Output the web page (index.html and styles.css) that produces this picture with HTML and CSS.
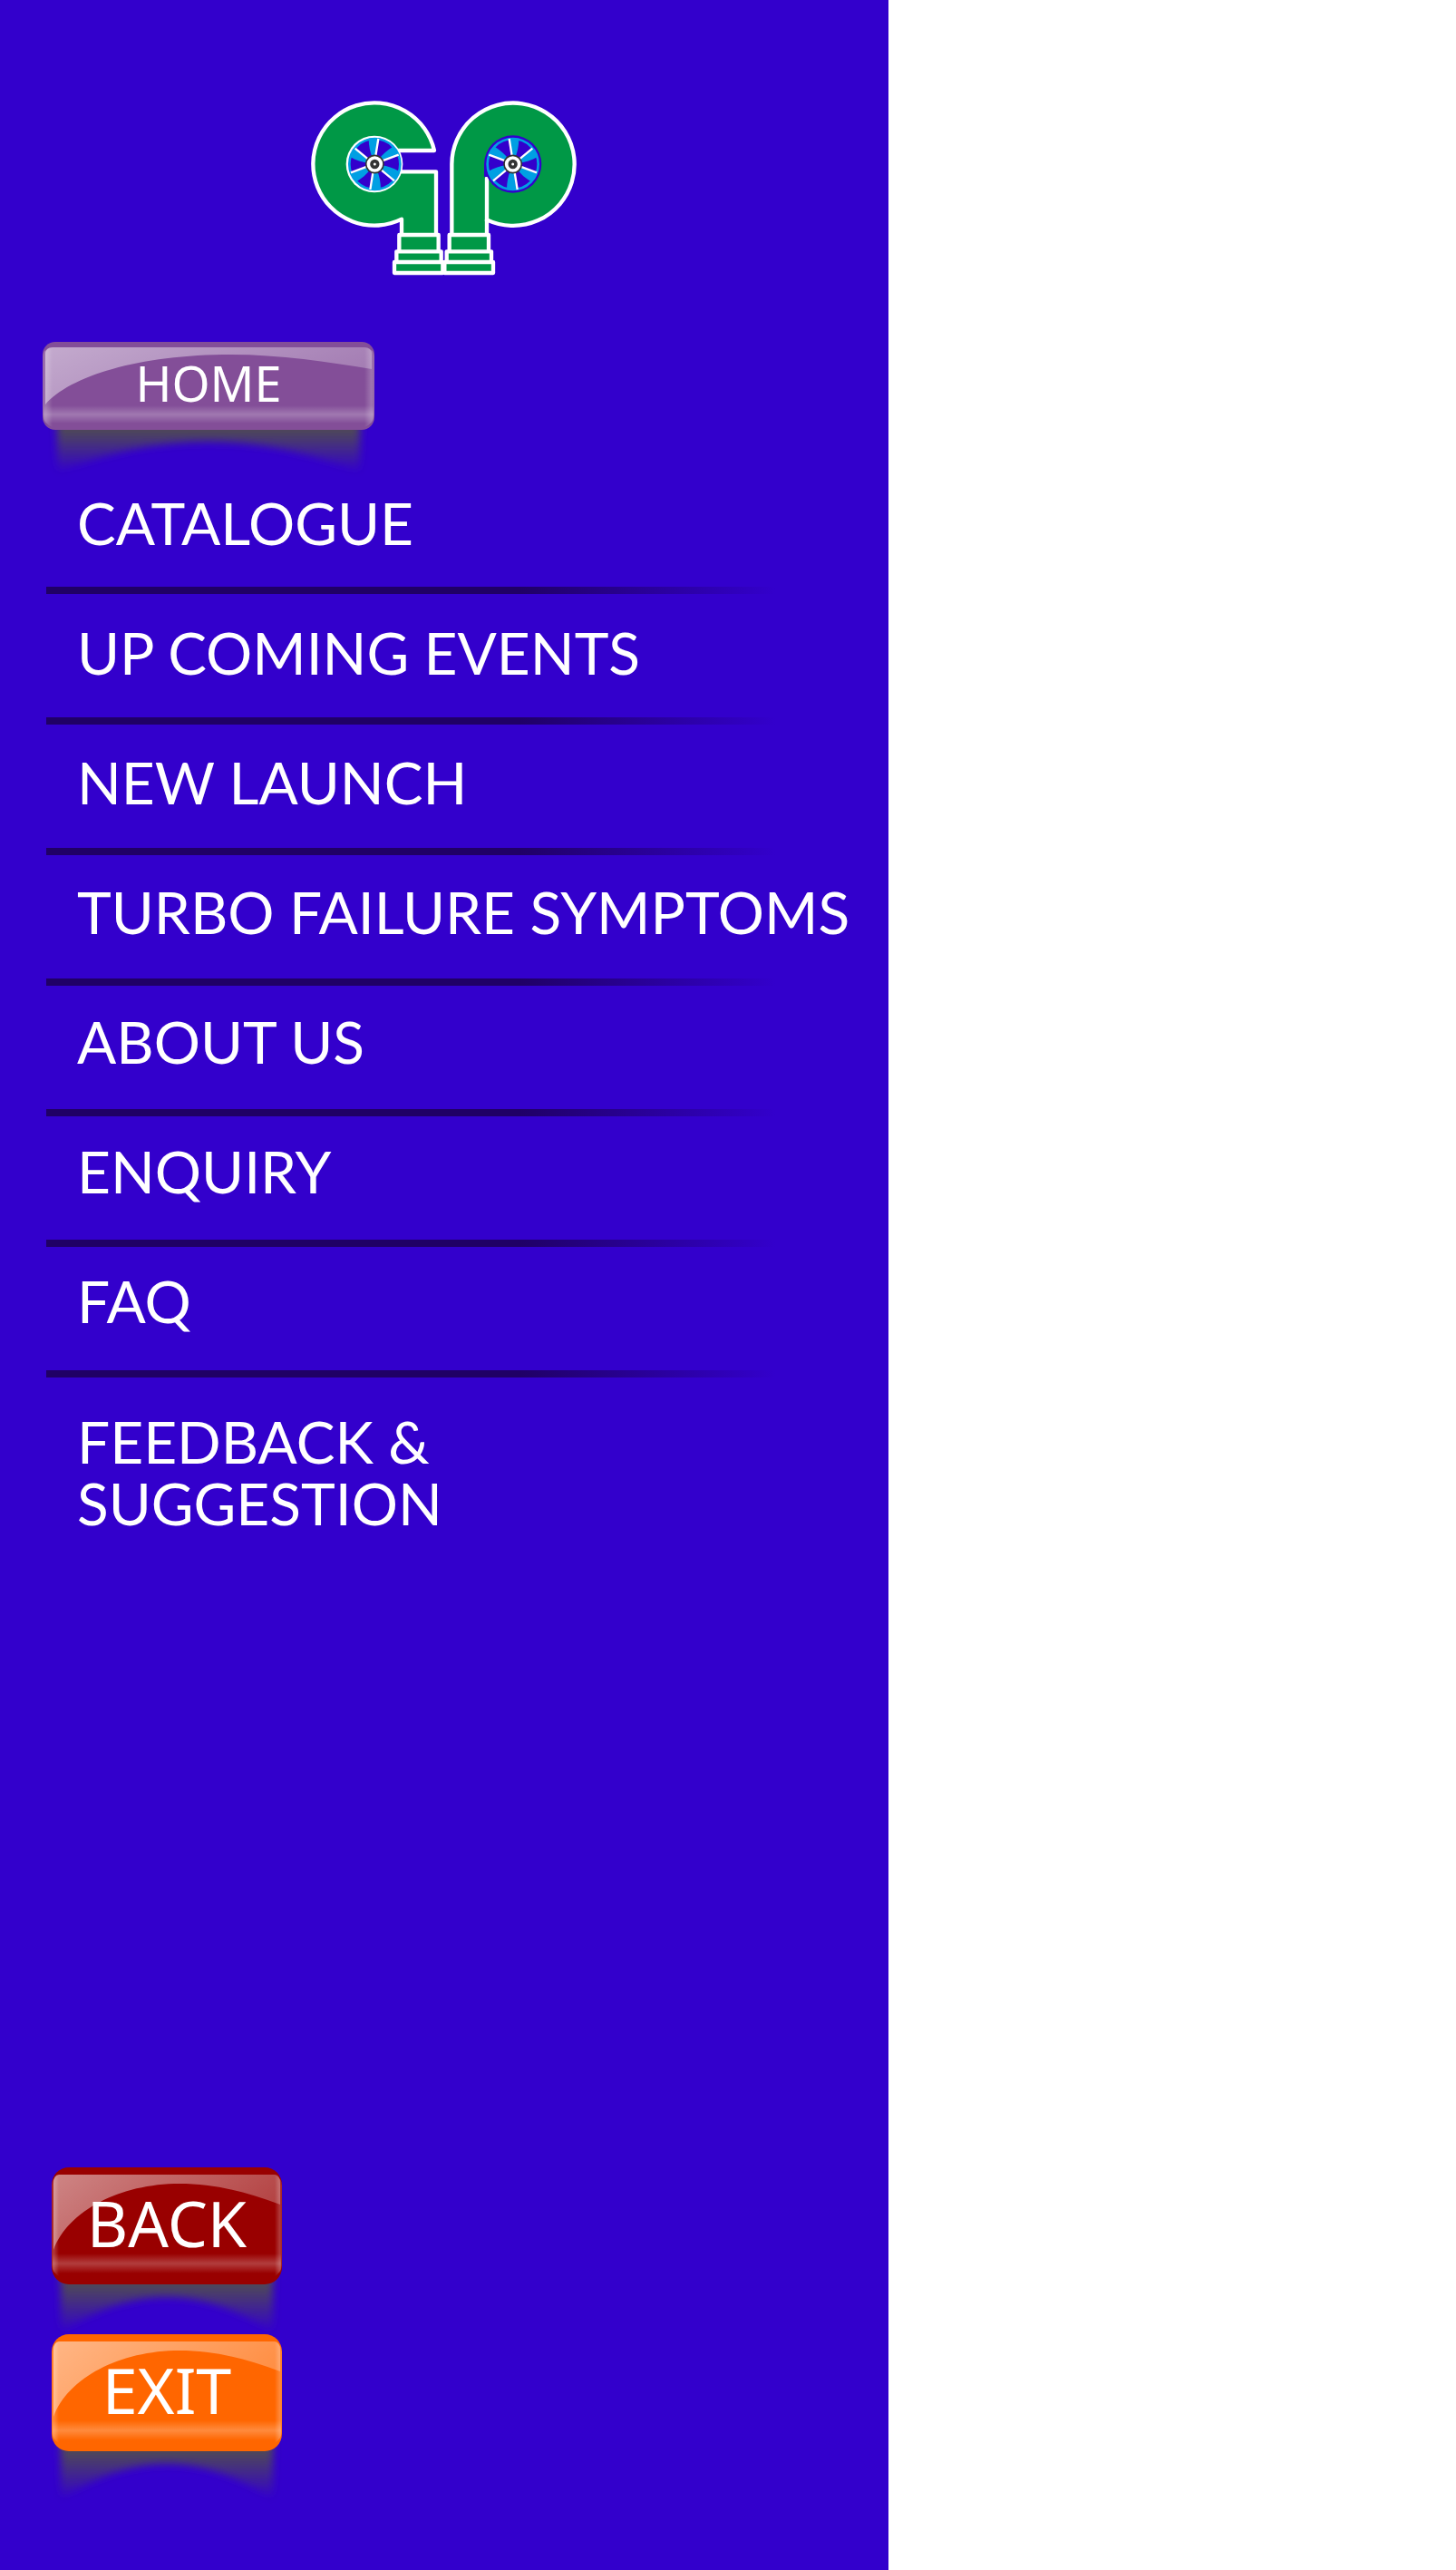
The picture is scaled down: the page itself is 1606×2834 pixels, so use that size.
FILE: index.html
```html
<!DOCTYPE html>
<html lang="en">
<head>
<meta charset="utf-8">
<meta name="viewport" content="width=device-width, initial-scale=1">
<title>GP Turbo menu</title>
<link rel="stylesheet" href="styles.css">
</head>
<body>
<aside class="sidebar">
  <svg class="logo" viewBox="0 0 960 645" role="img" aria-label="GP">
    <defs>
      <g id="wheel">
        <circle r="86" fill="#3300cc"/>
        <g id="blades" fill="#009fe3">
          <path id="blade" d="M0 0 12-84-20-84C-20-60-15-38-8-22Z"/>
          <use href="#blade" transform="rotate(60)"/>
          <use href="#blade" transform="rotate(120)"/>
          <use href="#blade" transform="rotate(180)"/>
          <use href="#blade" transform="rotate(240)"/>
          <use href="#blade" transform="rotate(300)"/>
        </g>
        <circle r="84" fill="none" stroke="#009fe3" stroke-width="8"/>
        <path d="M12-84-15 84M79-31-79 28M65 55-65-52" stroke="#fff" stroke-width="7"/>
        <circle r="29" fill="#fff" stroke="#333" stroke-width="5"/>
        <circle r="10" fill="#fff" stroke="#333" stroke-width="11"/>
      </g>
    </defs>
    <g fill="#009846" stroke="#fff" stroke-width="13" stroke-linejoin="round">
      <path d="M447 198A203 203 0 1 0 339 425V478H453V268H250V198Z"/>
      <path d="M505 478V243A203 203 0 1 1 621 427V478Z"/>
      <path d="M331 477H461V532H331ZM322 532H470V567H322ZM315 567H475V603H315Z"/>
      <path d="M497 477H627V532H497ZM488 532H636V567H488ZM481 567H642V603H481Z"/>
      <path d="M621 290V430" stroke-linecap="round"/>
    </g>
    <circle cx="249" cy="243" r="94" fill="#fff"/>
    <path d="M612 243V285H640V243Z" fill="#3300cc"/>
    <circle cx="707" cy="243" r="95" fill="#3300cc"/>
    <use href="#wheel" transform="translate(250 243)"/>
    <use href="#wheel" transform="translate(707 243) scale(-1 1)"/>
  </svg>

  <button class="gloss home" type="button">
    <svg class="gloss-art" viewBox="0 0 366 97" preserveAspectRatio="none" aria-hidden="true">
      <defs>
        <linearGradient id="shine" x1="0" y1="0" x2="1" y2="0.4">
          <stop offset="0" stop-color="#fff" stop-opacity=".52"/>
          <stop offset="1" stop-color="#fff" stop-opacity=".26"/>
        </linearGradient>
        <linearGradient id="band" x1="0" y1="0" x2="0" y2="1">
          <stop offset="0" stop-color="#fff" stop-opacity="0"/>
          <stop offset=".5" stop-color="#fff" stop-opacity=".24"/>
          <stop offset="1" stop-color="#fff" stop-opacity="0"/>
        </linearGradient>
        <linearGradient id="edge" x1="0" y1="0" x2="1" y2="0">
          <stop offset="0" stop-color="#fff" stop-opacity="0"/>
          <stop offset=".7" stop-color="#fff" stop-opacity=".22"/>
          <stop offset="1" stop-color="#fff" stop-opacity=".14"/>
        </linearGradient>
        <linearGradient id="fade" x1="0" y1="0" x2="0" y2="1">
          <stop offset=".25" stop-color="#4f4a55"/>
          <stop offset="1" stop-color="#4f4a55" stop-opacity="0"/>
        </linearGradient>
        <filter id="soft" x="-10%" y="-20%" width="120%" height="140%"><feGaussianBlur stdDeviation="4"/></filter>
      </defs>
      <path d="M16 80H350V144Q183 76 16 144Z" fill="url(#fade)" filter="url(#soft)"/>
      <rect width="366" height="97" rx="14" fill="#834e98"/>
      <path d="M3 69V14Q3 6 11 6H355Q363 6 363 14V30C315 22 262 14 208 14C105 14 30 38 3 69Z" fill="url(#shine)"/>
      <rect x="1" y="70" width="364" height="20" fill="url(#band)"/>
      <path id="home-rim" d="M355 6Q366 8 366 16V80Q365 90 355 94Z" fill="url(#edge)"/>
      <use href="#home-rim" transform="matrix(-1 0 0 1 366 0)"/>
    </svg>
    <span class="gloss-label">HOME</span>
  </button>

  <nav>
    <ul class="menu">
      <li><a href="#catalogue">CATALOGUE</a></li>
      <li><a href="#events">UP COMING EVENTS</a></li>
      <li><a href="#launch">NEW LAUNCH</a></li>
      <li><a href="#symptoms">TURBO FAILURE SYMPTOMS</a></li>
      <li><a href="#about">ABOUT US</a></li>
      <li><a href="#enquiry">ENQUIRY</a></li>
      <li><a href="#faq">FAQ</a></li>
      <li class="menu-last"><a href="#feedback">FEEDBACK &amp;<br>SUGGESTION</a></li>
    </ul>
  </nav>

  <div class="actions">
    <button class="gloss back" type="button">
      <svg class="gloss-art" viewBox="0 0 254 129" preserveAspectRatio="none" aria-hidden="true">
        <path d="M10 110H244V182Q127 104 10 182Z" fill="url(#fade)" filter="url(#soft)"/>
        <rect width="254" height="129" rx="19" fill="#990000"/>
        <path id="sheen" d="M2 91V18Q2 8 8 8H246Q252 8 252 18V41C215 27 180 18 141 18C75 18 18 48 2 91Z" fill="url(#shine)"/>
        <rect x="1" y="95" width="252" height="22" fill="url(#band)"/>
        <path id="rim" d="M246 8Q254 12 254 20V108Q253 116 246 120Z" fill="url(#edge)"/>
        <use href="#rim" transform="matrix(-1 0 0 1 254 0)"/>
      </svg>
      <span class="gloss-label">BACK</span>
    </button>
    <button class="gloss exit" type="button">
      <svg class="gloss-art" viewBox="0 0 254 129" preserveAspectRatio="none" aria-hidden="true">
        <path d="M10 110H244V182Q127 104 10 182Z" fill="url(#fade)" filter="url(#soft)"/>
        <rect width="254" height="129" rx="19" fill="#ff6600"/>
        <use href="#sheen"/>
        <rect x="1" y="95" width="252" height="22" fill="url(#band)"/>
        <use href="#rim"/>
        <use href="#rim" transform="matrix(-1 0 0 1 254 0)"/>
      </svg>
      <span class="gloss-label">EXIT</span>
    </button>
  </div>
</aside>
</body>
</html>
```
FILE: styles.css
```css
* { box-sizing: border-box; }

body {
  margin: 0;
  background: #fff;
}

.sidebar {
  display: flex;
  flex-direction: column;
  width: 61%;
  min-height: 100vh;
  padding: 100px 0 131px;
  background: #3300cc;
  color: #fff;
}

.logo {
  display: block;
  align-self: center;
  width: 320px;
  height: 215px;
}

/* Glossy buttons */
.gloss {
  position: relative;
  display: flex;
  align-items: center;
  justify-content: center;
  padding: 0 0 8px;
  border: 0;
  background: none;
  color: #fff;
  font-family: "Noto Sans", sans-serif;
  cursor: pointer;
}

.gloss-art {
  position: absolute;
  inset: 0;
  width: 100%;
  height: 100%;
  overflow: visible;
}

.gloss-label { position: relative; }

.home {
  width: 366px;
  height: 97px;
  margin: 62px 0 0 47px;
  font-size: 54px;
  line-height: 64px;
}

/* Menu: the fading rules are a tiled background */
.menu {
  margin: 37px 0 0 51px;
  padding: 16px 0 0 34px;
  list-style: none;
  font-family: Lato, sans-serif;
  font-size: 64px;
  line-height: 68px;
  background-image:
    linear-gradient(#3300cc 136px, transparent 136px),
    linear-gradient(to right, #200066 65%, #3300cc);
  background-repeat: repeat-y, no-repeat;
  background-size: 804px 144px, 804px 1008px;
}

.menu li {
  min-height: 143px;
  padding-top: 16px;
}

.menu .menu-last { padding-top: 28px; }

.menu a {
  color: inherit;
  text-decoration: none;
}

.actions {
  display: flex;
  flex-direction: column;
  gap: 55px;
  margin: auto 0 0 57px;
}

.back,
.exit {
  width: 254px;
  height: 129px;
  font-size: 70px;
  line-height: 80px;
}
```
